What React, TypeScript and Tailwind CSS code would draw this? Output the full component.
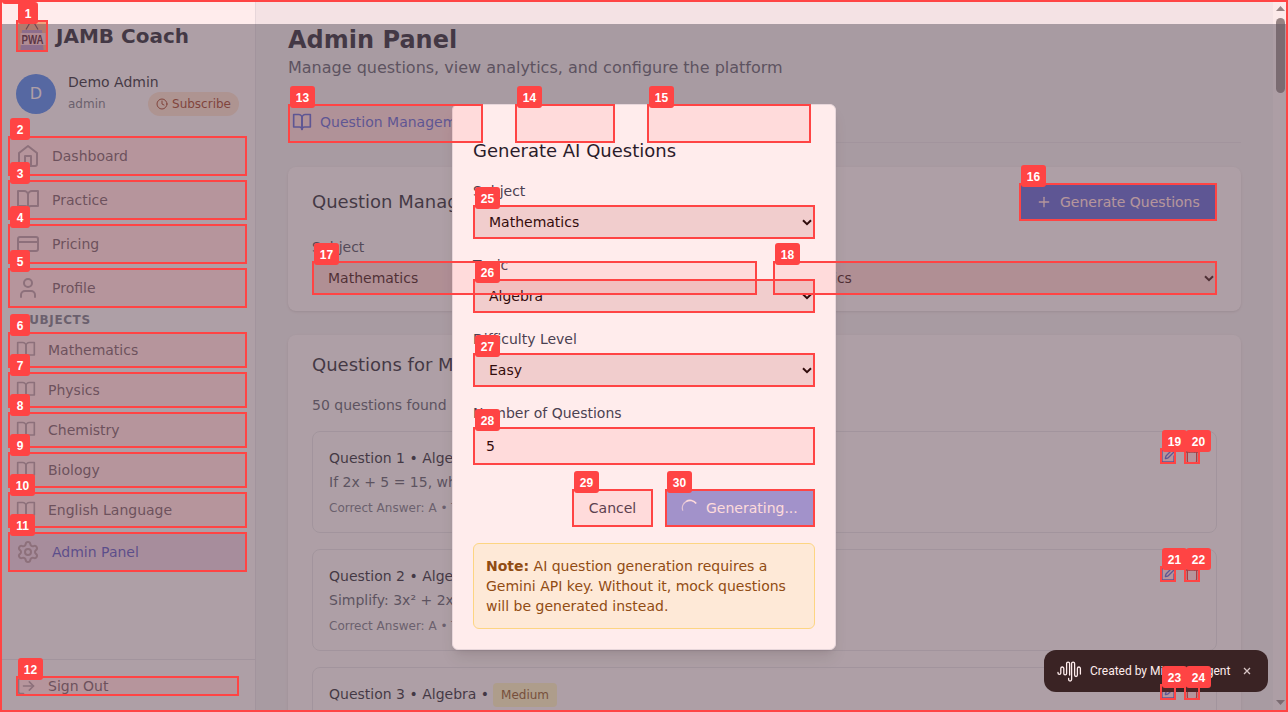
import React from "react";
import { Clock, Plus, SquarePen, Trash, Settings, LogOut, User, CreditCard } from "lucide-react";
import { FiBookOpen, FiHome } from "react-icons/fi";

type Mark = [number, number, number, number];

const marks: Mark[] = [
  [0, 0, 1288, 712],
  [16, 20, 32, 32],
  [8, 136, 239, 40],
  [8, 180, 239, 40],
  [8, 224, 239, 40],
  [8, 268, 239, 40],
  [8, 332, 239, 36],
  [8, 372, 239, 36],
  [8, 412, 239, 36],
  [8, 452, 239, 36],
  [8, 492, 239, 36],
  [8, 532, 239, 40],
  [16, 676, 223, 20],
  [288, 104, 195, 39],
  [515, 104, 100, 39],
  [647, 104, 164, 39],
  [1019, 183, 198, 38],
  [312, 261, 445, 34],
  [773, 261, 444, 34],
  [1160, 448, 16, 16],
  [1184, 448, 16, 16],
  [1160, 566, 16, 16],
  [1184, 566, 16, 16],
  [1160, 684, 16, 16],
  [1184, 684, 16, 16],
  [473, 205, 342, 34],
  [473, 279, 342, 34],
  [473, 353, 342, 34],
  [473, 427, 342, 38],
  [572, 489, 81, 38],
  [665, 489, 150, 38],
];

function Marks() {
  return (
    <div className="pointer-events-none absolute inset-0 overflow-hidden">
      {marks.map(([x, y, w, h], i) => (
        <div
          key={i}
          className="absolute border-2 border-[#ff4444] bg-[#ff4444]/10"
          style={{ left: x, top: y, width: w, height: h }}
        />
      ))}
      {marks.map(([x, y], i) => (
        <div
          key={i}
          className={
            "absolute flex h-[22px] items-center justify-center rounded-[3px] bg-[#ff4444] pt-px font-['Liberation_Sans',sans-serif] text-[12px] leading-none font-bold text-white " +
            (i < 10 ? "w-5" : "w-[25px]")
          }
          style={{ left: x + 2, top: y - 18 }}
        >
          {i > 0 && i}
        </div>
      ))}
    </div>
  );
}

function Chevron() {
  return (
    <svg className="h-[7px] w-[10px] shrink-0" viewBox="0 0 10 7" fill="none">
      <path d="M1 1.2 5 5.2 9 1.2" stroke="currentColor" strokeWidth="2" />
    </svg>
  );
}

function SelectBox({ value, tight }: { value: string; tight?: boolean }) {
  return (
    <div className="flex h-[34px] items-center justify-between bg-[#efefef] pr-[3px] pl-4 text-sm text-black">
      <span className={tight ? "tracking-[-0.1px]" : ""}>{value}</span>
      <Chevron />
    </div>
  );
}

function Sidebar() {
  const nav = [
    { label: "Dashboard", icon: <FiHome className="size-6" /> },
    { label: "Practice", icon: <FiBookOpen className="size-6" /> },
    { label: "Pricing", icon: <CreditCard className="size-6" /> },
    { label: "Profile", icon: <User className="size-6" /> },
  ];
  const subjects = ["Mathematics", "Physics", "Chemistry", "Biology", "English Language"];
  return (
    <aside className="flex w-64 shrink-0 flex-col border-r border-gray-200 bg-white pt-5">
      <div className="flex h-8 items-center px-4">
        <svg className="size-8" viewBox="0 0 32 32">
          <rect width="32" height="32" fill="#f0b98c" />
          <path d="M10 9.500 13.500 3.500h5L22 9.500" fill="none" stroke="#4b3a4c" strokeWidth="1.200" />
          <path d="M6 10h20l1.500 20h-23z" fill="#989cdc" />
          <rect x="4.500" y="13" width="25" height="12" fill="#f1e6ef" />
          <text
            x="16.500"
            y="23.500"
            textAnchor="middle"
            textLength="22"
            lengthAdjust="spacingAndGlyphs"
            fontSize="12.500"
            fontWeight="700"
            fontFamily="Liberation Sans, sans-serif"
            fill="#200c28"
          >
            PWA
          </text>
        </svg>
        <span className="ml-2 text-xl font-bold text-gray-900">JAMB Coach</span>
      </div>
      <div className="mt-5 flex h-[44px] items-center px-4">
        <div className="flex size-10 items-center justify-center rounded-full bg-[#3b82f6] text-base text-white">D</div>
        <div className="ml-3 flex-1">
          <div className="text-sm text-gray-900">Demo Admin</div>
          <div className="flex h-6 items-center justify-between">
            <span className="text-xs text-gray-500">admin</span>
            <span className="flex h-6 items-center gap-1 rounded-full bg-[#ffe4d0] px-2 text-xs text-[#9a3412]">
              <Clock className="size-3" />
              Subscribe
            </span>
          </div>
        </div>
      </div>
      <nav className="mt-5 flex flex-1 flex-col gap-1 px-2 text-sm text-gray-600">
        {nav.map((n) => (
          <div key={n.label} className="flex h-10 shrink-0 items-center gap-3 px-2">
            <span className="text-gray-400">{n.icon}</span>
            {n.label}
          </div>
        ))}
        <div className="flex h-4 shrink-0 items-center px-3 text-xs font-bold tracking-wider text-gray-500 uppercase">Subjects</div>
        {subjects.map((s) => (
          <div key={s} className="flex h-9 shrink-0 items-center gap-3 px-2">
            <FiBookOpen className="size-5 text-gray-400" />
            {s}
          </div>
        ))}
        <div className="flex h-10 shrink-0 items-center gap-3 bg-[#dbeafe] px-2 text-[#1d4ed8]">
          <Settings className="size-6 text-gray-400" />
          Admin Panel
        </div>
      </nav>
      <div className="h-[53px] shrink-0 border-t border-gray-200 px-4 pt-4">
        <div className="flex h-5 items-center gap-3 text-sm text-gray-600">
          <LogOut className="size-5 text-gray-400" />
          Sign Out
        </div>
      </div>
    </aside>
  );
}

const questions = [
  { n: 1, level: "Easy", body: "If 2x + 5 = 15, what is the value of x?" },
  { n: 2, level: "Easy", body: "Simplify: 3x² + 2x² - x²" },
  { n: 3, level: "Medium", body: "Solve for x: x² - 5x + 6 = 0" },
];

function Main() {
  return (
    <main className="min-w-0 flex-1 overflow-hidden bg-gray-100 px-8 pt-6">
      <h1 className="text-2xl leading-8 font-bold text-gray-900">Admin Panel</h1>
      <p className="text-base leading-6 text-gray-600">Manage questions, view analytics, and configure the platform</p>
      <div className="mt-6 flex h-[39px] gap-8 border-b border-gray-200 text-sm">
        <div className="flex w-[195px] items-center gap-2 px-1 pb-0.5 whitespace-nowrap text-[#2563eb]">
          <FiBookOpen className="size-5 shrink-0" />
          Question Management
        </div>
      </div>
      <section className="mt-6 h-36 rounded-lg bg-white px-6 pt-4 shadow-sm">
        <div className="flex h-[38px] items-center justify-between">
          <h2 className="text-lg text-gray-900">Question Management</h2>
          <div className="flex h-[38px] w-[198px] items-center bg-[#2563eb] pl-[17px] text-sm text-white">
            <Plus className="mr-2 size-4" />
            Generate Questions
          </div>
        </div>
        <div className="mt-4 grid grid-cols-2 gap-4">
          <div>
            <div className="mb-1 text-sm text-gray-700">Subject</div>
            <SelectBox value="Mathematics" />
          </div>
          <div>
            <div className="mb-1 text-sm text-gray-700">Topic</div>
            <SelectBox value="All Topics" tight />
          </div>
        </div>
      </section>
      <section className="mt-6 h-[500px] rounded-lg bg-white px-6 pt-4 shadow-sm">
        <h2 className="text-lg leading-7 text-gray-900">Questions for Mathematics</h2>
        <p className="mt-4 text-sm text-gray-600">50 questions found</p>
        <div className="mt-4 flex flex-col gap-4">
          {questions.map((q) => (
            <article key={q.n} className="flex h-[102px] items-start justify-between rounded-lg border border-gray-200 p-4">
              <div>
                <div className="flex h-5 items-center text-sm text-gray-900">
                  Question {q.n} • Algebra •
                  <span className="mt-px ml-1 rounded bg-[#fef9c3] px-2 py-1 text-xs text-[#854d0e]">{q.level}</span>
                </div>
                <div className="mt-1 text-sm text-gray-600">{q.body}</div>
                <div className="mt-2 text-xs text-gray-500">Correct Answer: A • Type: Multiple Choice</div>
              </div>
              <div className="flex gap-2">
                <SquarePen className="size-4 text-[#2563eb]" />
                <Trash className="size-4 text-[#dc2626]" />
              </div>
            </article>
          ))}
        </div>
      </section>
    </main>
  );
}

function ScrollBar() {
  return (
    <div className="flex w-[15px] shrink-0 flex-col items-center bg-[#fcfcfc]">
      <svg className="mt-[6px] h-[5px] w-[9px]" viewBox="0 0 9 5"><path d="M4.500 0 9 5H0z" fill="#8b8b8b" /></svg>
      <div className="mt-[7px] h-[75px] w-[9px] rounded-full bg-[#8b8b8b]" />
      <div className="flex-1" />
      <svg className="mb-[7px] h-[5px] w-[9px]" viewBox="0 0 9 5"><path d="M4.500 5 9 0H0z" fill="#8b8b8b" /></svg>
    </div>
  );
}

function Modal() {
  const fields = [
    ["Subject", "Mathematics"],
    ["Topic", "Algebra"],
    ["Difficulty Level", "Easy"],
  ];
  return (
    <div className="absolute inset-x-0 top-6 bottom-0 flex items-start justify-center bg-[#4b5563]/50 pt-20">
      <div className="h-[546px] w-96 rounded-md border border-gray-200 bg-white px-5 pt-8 shadow-lg">
        <h3 className="text-lg leading-7 text-gray-900">Generate AI Questions</h3>
        <div className="mt-4 flex flex-col gap-4">
          {fields.map(([label, value]) => (
            <div key={label} className="h-[58px]">
              <div className="mb-1 text-sm text-gray-700">{label}</div>
              <SelectBox value={value} />
            </div>
          ))}
          <div>
            <div className="mb-1 text-sm text-gray-700">Number of Questions</div>
            <div className="flex h-[38px] items-center bg-white px-[13px] text-sm text-black">5</div>
          </div>
        </div>
        <div className="mt-6 flex justify-end gap-3 text-sm">
          <div className="flex h-[38px] w-[81px] items-center justify-center text-gray-700">Cancel</div>
          <div className="flex h-[38px] w-[150px] items-center bg-[#1d4ed8] pl-[17px] whitespace-nowrap text-white opacity-50">
            <svg className="mr-2 size-4 shrink-0 overflow-visible" viewBox="0 0 16 16" fill="none">
              <path d="M.8 10.600A7.600 7.600 0 0 1 4 1.600" stroke="white" strokeOpacity=".7" strokeWidth="1.300" />
              <path d="M4 1.600A7.600 7.600 0 0 1 14.200 3.500" stroke="white" strokeWidth="1.700" />
            </svg>
            Generating...
          </div>
        </div>
        <div className="mt-4 rounded-md border border-[#fde68a] bg-[#fefce8] p-3 text-sm text-[#854d0e]">
          <strong>Note:</strong> AI question generation requires a Gemini API key. Without it, mock questions will be generated instead.
        </div>
      </div>
    </div>
  );
}

function Toast() {
  return (
    <div className="absolute top-[650px] left-[1044px] flex h-[42px] w-56 items-center rounded-xl bg-[#242021] pl-[13px] font-[Roboto,sans-serif] text-xs text-white">
      <svg className="mr-2 h-[21px] w-[25px] shrink-0" viewBox="0 0 25 21" fill="none" stroke="white" strokeWidth="1.300" strokeLinecap="round">
        <path d="M1 11.500v.5a1.400 1.400 0 0 0 2.800 0V7.500a1.500 1.500 0 0 1 3 0v5a1.400 1.400 0 0 0 2.800 0V2.600a1.500 1.500 0 0 1 3 0V14M11.600 17.500v1a1.500 1.500 0 0 0 3 0V2.600a1.500 1.500 0 0 1 3 0v11.500a1.400 1.400 0 0 0 2.800 0V7.500a1.500 1.500 0 0 1 3 0V13" />
      </svg>
      <span className="whitespace-nowrap">Created by MiniMax Agent</span>
      <svg className="ml-[13px] size-2" viewBox="0 0 8 8"><path d="M1 1l6 6M7 1 1 7" stroke="#d4d4d4" strokeWidth="1.300" /></svg>
    </div>
  );
}

export default function App() {
  return (
    <div className="relative flex h-[712px] w-[1288px] overflow-hidden bg-white font-['DejaVu_Sans',sans-serif]">
      <Sidebar />
      <Main />
      <ScrollBar />
      <Modal />
      <Toast />
      <Marks />
    </div>
  );
}
